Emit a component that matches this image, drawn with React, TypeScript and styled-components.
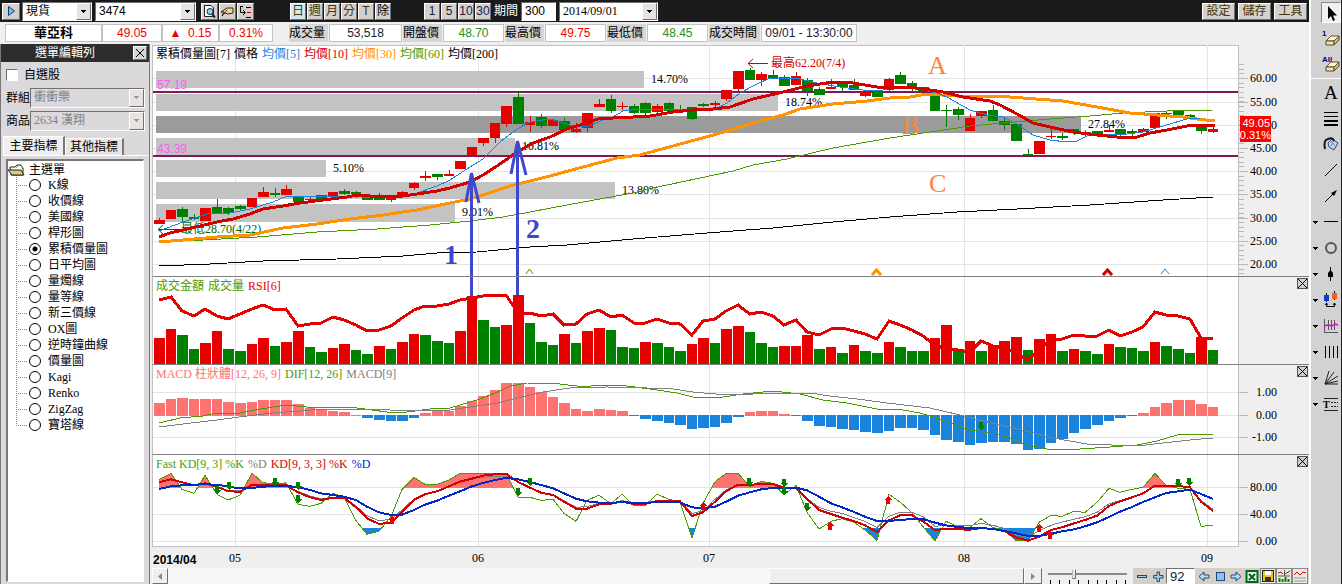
import React from "react";
import styled, { createGlobalStyle, css } from "styled-components";

const SERIF = '"Liberation Serif", "Noto Sans CJK TC", serif';
const SANS = '"Liberation Sans", "Noto Sans CJK TC", sans-serif';

const RED = "#e60000";
const GREEN = "#008000";
const LINE_RED = "#d40000";
const LINE_GREEN = "#4c9a00";
const LINE_BLUE = "#1a84dc";
const LINE_ORANGE = "#ff9200";
const GRID = "#e4e4e4";
const INK = "#3f48cc";

const GlobalStyle = createGlobalStyle`
  *, *::before, *::after { box-sizing: border-box; }
  body { margin: 0; background: #efefef; font: 12px/16px ${SERIF}; color: #000; }
  button, input, select { font: inherit; color: inherit; margin: 0; padding: 0; border-radius: 0; }
  ul { list-style: none; margin: 0; padding: 0; }
  svg { display: block; }
`;

const raised = css`
  border: 1px solid;
  border-color: #fff #707070 #707070 #fff;
`;
const sunken = css`
  border: 1px solid;
  border-color: #707070 #fff #fff #707070;
`;

/* ---------- page frame ---------- */

const Page = styled.div`
  display: flex;
  min-height: 100vh;
`;
const Main = styled.main`
  flex: 1;
  min-width: 0;
  display: flex;
  flex-direction: column;
`;
const Body = styled.div`
  flex: 1;
  display: flex;
`;

/* ---------- top toolbar ---------- */

const TopBar = styled.header`
  display: flex;
  align-items: center;
  height: 22px;
  padding: 0 2px;
  background: #1a1a1a;
  color: #fff;
`;
const Group = styled.div<{ $gap?: number; $before?: number; $end?: boolean }>`
  display: flex;
  align-items: center;
  gap: ${(p) => p.$gap ?? 1}px;
  margin-left: ${(p) => (p.$end ? "auto" : `${p.$before ?? 0}px`)};
`;
const KeyButton = styled.button<{ $w?: number; $on?: boolean; $ink?: string }>`
  ${raised}
  display: flex;
  align-items: center;
  justify-content: center;
  width: ${(p) => p.$w ?? 16}px;
  height: 17px;
  background: ${(p) => (p.$on ? "#cfe9ee" : "#d3d0cd")};
  color: ${(p) => p.$ink ?? "#453508"};
  font: 12px/14px ${SANS};
`;
const Combo = styled.div<{ $w: number; $off?: boolean; $h?: number }>`
  ${sunken}
  display: flex;
  width: ${(p) => p.$w}px;
  height: ${(p) => p.$h ?? 19}px;
  background: ${(p) => (p.$off ? "#dbd9dc" : "#fff")};
  color: ${(p) => (p.$off ? "#808080" : "#000")};
`;
const ComboSelect = styled.select<{ $face?: string }>`
  appearance: none;
  flex: 1;
  min-width: 0;
  border: 0;
  padding: 0 3px;
  background: transparent;
  opacity: 1;
  font: 12px/15px ${(p) => p.$face ?? SERIF};
`;
const ComboArrow = styled.span`
  ${raised}
  display: flex;
  align-items: center;
  justify-content: center;
  width: 15px;
  background: #e6e3e0;
  pointer-events: none;
`;
const PeriodLabel = styled.label`
  display: flex;
  align-items: center;
  gap: 3px;
`;
const PeriodInput = styled.input`
  ${sunken}
  width: 35px;
  height: 19px;
  padding: 0 3px;
  background: #fff;
  color: #000;
  font: 12px/15px ${SANS};
`;

/* ---------- quote bar ---------- */

const QuoteBar = styled.section`
  display: flex;
  align-items: flex-start;
  height: 23px;
  padding: 2px 5px 0;
  font: 12px/16px ${SANS};
`;
const QuoteCell = styled.span<{ $w: number; $ink?: string; $bold?: boolean }>`
  width: ${(p) => p.$w}px;
  height: 18px;
  border: 1px solid #c3c3c3;
  background: #fff;
  color: ${(p) => p.$ink ?? "#1b1b30"};
  font-size: ${(p) => (p.$bold ? 13 : 12)}px;
  font-weight: ${(p) => (p.$bold ? 700 : 400)};
  text-align: center;
  white-space: pre;
`;
const QuoteLabel = styled.span<{ $w: number }>`
  width: ${(p) => p.$w}px;
  height: 18px;
  line-height: 18px;
  background: #d6d6d6;
  white-space: nowrap;
`;

/* ---------- left menu ---------- */

const Side = styled.aside`
  display: flex;
  flex-direction: column;
  width: 150px;
  margin-top: -1px;
  border: solid #777;
  border-width: 0 1px 0 1px;
  background: #dbd9dc;
`;
const SideTitle = styled.div`
  display: flex;
  align-items: center;
  height: 18px;
  padding: 0 2px 0 34px;
  background: #2d2d2d;
  color: #fff;
`;
const CloseButton = styled.button`
  ${raised}
  display: flex;
  align-items: center;
  justify-content: center;
  width: 14px;
  height: 14px;
  margin-left: auto;
  background: #d6d6d6;
`;
const CheckRow = styled.label`
  display: flex;
  align-items: center;
  gap: 6px;
  height: 16px;
  margin: 5px 0 3px 5px;
`;
const Check = styled.input`
  ${sunken}
  appearance: none;
  width: 12px;
  height: 12px;
  background: #fff;
`;
const FieldRow = styled.label`
  display: flex;
  align-items: center;
  height: 23px;
  padding-left: 5px;
`;
const Tabs = styled.div`
  display: flex;
  margin: 4px 0 0 2px;
  border-bottom: 1px solid #fff;
`;
const Tab = styled.button<{ $on?: boolean }>`
  width: ${(p) => (p.$on ? 62 : 59)}px;
  height: ${(p) => (p.$on ? 19 : 17)}px;
  align-self: flex-end;
  border: solid;
  border-width: 1px 2px 0 1px;
  border-color: #fff #777 #fff #fff;
  background: ${(p) => (p.$on ? "#efefef" : "#e6e5e6")};
  white-space: nowrap;
`;
const Tree = styled.div`
  flex: 1;
  margin: 3px 5px 2px;
  padding: 1px 0;
  border: solid;
  border-width: 2px 1px 1px 2px;
  border-color: #777 #fff #fff #777;
  background: #fff;
`;
const TreeRoot = styled.div`
  display: flex;
  align-items: center;
  gap: 4px;
  height: 15px;
`;
const TreeItem = styled.label`
  display: flex;
  align-items: center;
  height: 16px;
  padding-left: 8px;
`;
const Radio = styled.input`
  appearance: none;
  width: 12px;
  height: 12px;
  margin: 0 7px 0 2px;
  border: 1px solid #000;
  border-radius: 50%;
  background: #fff;
  &:checked {
    background: radial-gradient(#000 2px, #fff 3px);
  }
`;

/* ---------- charts ---------- */

const Charts = styled.section`
  flex: 1;
  min-width: 0;
  display: flex;
  flex-direction: column;
  padding-left: 2px;
`;
const PanelRow = styled.div<{ $h: number; $last?: boolean }>`
  display: flex;
  height: ${(p) => p.$h}px;
  border-left: 1px solid #c0c0c0;
  border-bottom: ${(p) => (p.$last ? "0" : "1px solid #808080")};
`;
const Plot = styled.div<{ $last?: boolean }>`
  flex: 1;
  min-width: 0;
  display: grid;
  background: #fff;
  border-bottom: ${(p) => (p.$last ? "1px solid #c0c0c0" : "0")};
`;
const Canvas = styled.svg`
  grid-area: 1 / 1;
  width: 100%;
  height: 100%;
  font: 12px ${SERIF};
`;
const Legend = styled.div`
  grid-area: 1 / 1;
  z-index: 1;
  display: flex;
  gap: 4px;
  align-self: start;
  padding: 1px 3px;
  white-space: pre;
`;
const LegendItem = styled.span<{ $ink: string }>`
  color: ${(p) => p.$ink};
`;
const AxisColumn = styled.div`
  display: grid;
  width: 71px;
  border-left: 1px solid #c0c0c0;
`;
const PanelClose = styled.button`
  grid-area: 1 / 1;
  z-index: 1;
  display: flex;
  align-items: center;
  justify-content: center;
  justify-self: end;
  width: 11px;
  height: 11px;
  margin: 1px 1px 0 0;
  border: 1px solid #555;
  background: #cfcfcf;
`;
const DateRow = styled.div`
  height: 21px;
  border-left: 1px solid transparent;
`;

/* ---------- bottom strip ---------- */

const BottomBar = styled.footer`
  display: flex;
  height: 16px;
`;
const ScrollTrack = styled.div`
  flex: 1;
  display: grid;
  grid-template-columns: 16px 602fr 255fr 18px;
  background: #f6f6f6;
`;
const ScrollPiece = styled.button`
  ${raised}
  display: flex;
  align-items: center;
  justify-content: center;
  background: #efefef;
`;
const ZoomSlider = styled.label`
  display: grid;
  width: 91px;
  padding: 0 6px;
`;
const SliderInput = styled.input`
  appearance: none;
  grid-area: 1 / 1;
  z-index: 1;
  width: 79px;
  height: 12px;
  background: transparent;
  &::-webkit-slider-runnable-track {
    height: 2px;
    background: #8a8a8a;
  }
  &::-webkit-slider-thumb {
    appearance: none;
    width: 4px;
    height: 10px;
    margin-top: -4px;
    border: 1px solid;
    border-color: #fff #707070 #707070 #bbb;
    background: #e6e6e6;
  }
`;
const SliderTicks = styled.svg`
  grid-area: 1 / 1;
  align-self: end;
  width: 79px;
  height: 4px;
`;
const MiniBar = styled.div`
  display: flex;
  align-items: center;
  width: 176px;
  padding: 0 1px;
  background: #d4d0c8;
`;
const MiniButton = styled.button<{ $on?: boolean }>`
  display: flex;
  align-items: center;
  justify-content: center;
  width: 16px;
  height: 16px;
  border: ${(p) => (p.$on ? "1px solid #888" : "0")};
  background: ${(p) => (p.$on ? "#ebe9e4" : "transparent")};
`;
const MiniInput = styled.input`
  ${sunken}
  width: 29px;
  height: 16px;
  padding: 0 3px;
  margin-right: 1px;
  background: #fff;
  color: #1b1b30;
  font: 13px/14px ${SANS};
`;

/* ---------- right tool rail ---------- */

const Rail = styled.nav`
  display: flex;
  flex-direction: column;
  width: 33px;
  padding-top: 2px;
  border-left: 2px solid #fff;
  border-right: 1px solid #222;
  background: #d2d2d2;
`;
const RailButton = styled.button<{ $on?: boolean }>`
  display: flex;
  align-items: center;
  justify-content: flex-end;
  gap: 4px;
  align-self: flex-end;
  height: ${(p) => (p.$on ? 21 : 20)}px;
  margin-bottom: ${(p) => (p.$on ? 5 : 6)}px;
  border: 1px solid;
  border-color: ${(p) => (p.$on ? "#888 #fff #fff #888" : "transparent")};
  background: ${(p) => (p.$on ? "#f0f0f0" : "transparent")};
`;
const RailRule = styled.hr`
  width: 100%;
  height: 1px;
  margin: -2px 0 3px;
  border: 0;
  background: #fff;
`;

/* ---------- data ---------- */

const X0 = 6;
const STEP = 11.58;
const dayX = (i: number) => Math.round(X0 + i * STEP);
const dayWidth = (i: number) => dayX(i + 1) - dayX(i) - 1;
const MONTHS: [number, string][] = [
  [82, "05"],
  [325, "06"],
  [556, "07"],
  [811, "08"],
  [1054, "09"],
];

// One day per entry: direction, body top, body bottom, wick top, wick bottom.
type Candle = [0 | 1, number, number, number, number];
const CANDLES: Candle[] = [
  [1,220,224,218,224],[1,210,219,210,219],[0,209,217,207,222],[0,217,219,214,220],[1,208,221,208,221],[0,207,213,199,213],
  [0,208,213,207,215],[0,206,209,205,210],[1,198,207,198,207],[1,192,197,187,197],[0,193,195,188,197],[1,189,195,185,195],
  [0,197,202,197,202],[1,199,200,196,202],[0,195,199,195,199],[1,192,196,192,196],[0,191,194,189,195],[0,192,194,191,198],
  [0,197,200,197,200],[0,197,200,193,200],[1,198,200,198,202],[1,192,196,191,196],[1,183,188,182,190],[1,176,178,171,181],
  [0,174,177,174,180],[1,174,176,170,176],[1,161,169,161,169],[1,147,155,147,155],[1,138,143,138,146],[1,123,138,123,143],
  [1,106,124,106,127],[0,97,124,92,124],[1,122,125,116,132],[0,117,126,114,128],[1,120,126,119,126],[0,121,130,118,130],
  [1,129,132,123,133],[1,113,128,113,132],[1,104,107,99,107],[0,99,111,95,113],[1,106,107,102,110],[0,106,113,104,114],
  [0,103,113,102,115],[1,106,112,104,114],[0,103,111,102,111],[0,109,111,105,112],[0,107,119,107,120],[0,104,106,103,107],
  [1,103,105,101,107],[1,90,99,90,101],[1,71,89,71,91],[0,70,80,68,80],[1,74,80,72,86],[0,75,79,70,79],
  [0,77,86,75,86],[1,76,85,72,85],[0,80,91,78,96],[0,89,95,87,95],[1,87,89,79,89],[0,82,87,82,91],
  [0,85,90,79,90],[1,91,96,91,97],[0,90,97,90,97],[1,79,90,78,93],[0,75,84,72,84],[0,83,87,81,91],
  [0,87,91,87,91],[0,95,111,95,111],[0,110,111,105,127],[0,109,115,107,120],[1,118,131,114,131],[1,111,116,111,118],
  [0,110,121,105,121],[0,121,125,117,130],[0,124,141,124,141],[0,154,155,149,155],[1,141,154,141,154],[1,136,137,129,139],
  [0,136,138,133,140],[0,129,133,129,135],[0,132,134,130,137],[0,131,135,131,135],[1,130,132,126,132],[0,129,135,129,138],
  [0,131,133,129,136],[1,129,132,128,132],[1,113,128,113,128],[0,113,114,111,119],[0,111,115,111,115],[0,115,117,114,119],
  [0,127,131,127,134],[1,129,132,126,133],
];

const PROFILE = [
  { y: 71, h: 17, end: 644, label: "14.70%" },
  { y: 94, h: 17, end: 778, label: "18.74%" },
  { y: 116, h: 17, end: 1081, label: "27.84%", dark: true },
  { y: 138, h: 17, end: 515, label: "10.81%" },
  { y: 160, h: 17, end: 326, label: "5.10%" },
  { y: 182, h: 17, end: 615, label: "13.80%" },
  { y: 204, h: 18, end: 455, label: "9.01%" },
];

const MA5 =
  "159,231 183,222 207,214 230,213 250,209 273,202 287,196 337,196 363,197 397,197 417,193 437,186 450,180 470,167 483,159 500,142 517,129 530,122 550,119 570,125 587,127 600,121 613,117 623,111 640,109 693,109 700,111 717,108 727,103 740,93 753,86 770,78 787,78 800,79 817,83 840,87 863,90 883,90 895,87 913,88 923,90 937,93 947,97 970,110 987,115 1003,117 1017,124 1033,135 1050,140 1067,142 1077,141 1087,136 1103,135 1127,134 1143,132 1163,126 1180,121 1190,118 1200,119";
const MA10 =
  "159,237 170,233 183,230 200,226 217,222 233,219 250,214 263,209 283,206 300,203 323,200 347,197 357,195 370,196 403,196 417,194 437,191 450,188 470,182 483,175 497,166 510,157 517,152 533,143 550,137 567,129 583,124 598,119 613,118 633,117 650,116 673,112 693,110 713,109 730,107 753,99 783,92 807,86 833,82 853,83 877,87 907,87 923,89 943,92 963,97 990,101 1000,105 1017,114 1033,123 1050,127 1073,132 1097,135 1117,137 1137,137 1150,133 1167,130 1187,126 1215,125";
const MA30 =
  "159,242 183,240 217,237 250,235 283,228 317,224 350,219 383,215 417,210 450,203 470,199 483,195 510,186 550,176 583,167 617,158 640,155 673,146 717,134 740,127 767,119 783,115 800,109 833,104 867,101 890,98 910,97 927,94 957,96 997,96 1023,98 1063,101 1097,107 1130,113 1157,115 1183,117 1197,119 1215,121";
const MA60 =
  "159,242 203,240 257,237 317,232 377,229 430,225 470,221 503,217 530,212 567,205 633,193 653,188 700,178 733,171 753,165 787,159 833,148 890,138 930,132 970,126 1003,123 1050,119 1090,116 1123,113 1167,111 1213,110";
const MA200 =
  "159,266 210,264 263,261 337,259 403,256 437,253 477,252 530,247 567,245 633,239 707,233 773,228 833,222 890,217 957,212 1017,209 1090,205 1163,200 1213,197";

// Volume: height of each day's bar, negative on a falling day.
const VOLUME = [
  26,35,-29,-15,21,33,-15,-13,20,26,-18,22,33,-17,-12,16,20,-14,-10,18,-15,22,30,-29,-23,-21,33,68,-44,-37,39,69,-41,-22,-19,30,-21,33,36,-34,-17,-16,22,-21,-17,-13,
  20,26,-21,35,38,-32,-21,-17,18,18,29,-15,17,-11,19,-13,-11,22,-17,-13,-13,26,39,-13,23,-13,19,23,27,-14,25,30,-13,15,-13,-10,20,-17,-16,-13,22,-18,-15,-11,27,-14,
];
const RSI = [
  64,67,53,48,55,48,45,50,55,59,54,55,38,40,41,47,44,39,33,34,38,46,54,58,58,60,64,66,68,69,69,51,51,48,50,39,40,50,54,47,49,41,41,45,41,40,
  29,43,45,53,59,50,52,48,39,44,32,29,35,36,33,30,25,43,39,34,28,19,15,14,12,23,18,16,11,4,14,25,25,29,28,28,34,28,32,37,52,49,48,45,26,26,
];
const HISTOGRAM = [
  13,17,18,17,17,17,14,13,14,16,16,16,12,8,6,5,4,1,-3,-5,-6,-6,-3,3,5,5,10,15,20,26,33,33,29,24,19,13,7,5,7,6,5,-1,-4,-6,-8,-10,
  -14,-13,-12,-8,-2,4,5,5,2,-1,-6,-11,-12,-14,-15,-17,-18,-16,-13,-13,-15,-20,-25,-27,-30,-28,-27,-27,-29,-35,-34,-28,-24,-18,-14,-10,-6,-3,-1,3,9,13,16,16,12,9,
];
const DIF =
  "159,423 180,418 203,416 216,413 240,413 260,409 287,405 307,407 337,407 357,408 387,412 407,412 430,409 450,408 480,399 500,391 510,386 527,383 560,384 585,387 598,385 627,386 650,389 677,393 693,397 717,398 743,394 773,391 800,394 823,400 847,403 877,409 903,410 920,413 930,416 950,423 970,430 997,434 1013,439 1027,445 1047,449 1080,449 1110,447 1137,445 1157,441 1177,435 1190,434 1213,435";
const SIGNAL =
  "159,427 183,424 217,420 247,416 273,413 300,411 323,409 360,409 390,410 417,411 450,410 470,407 497,403 517,398 543,392 570,388 607,387 647,388 673,389 693,392 727,395 753,394 773,393 810,393 830,396 857,399 887,403 930,408 960,415 983,421 1010,427 1030,432 1053,438 1087,444 1137,446 1163,443 1190,440 1213,438";

// Stochastic lines, measured downward in thirds of a pixel.
const FAST_K = [
  88,70,118,130,76,133,150,136,70,98,103,98,163,169,160,130,142,212,253,244,200,118,82,103,103,90,70,70,70,70,70,142,142,151,148,190,214,151,136,161,133,166,166,133,148,157,
  265,160,95,70,70,110,94,100,134,106,187,237,214,206,217,240,271,133,156,188,230,273,214,230,232,206,233,240,272,273,217,196,199,184,187,157,115,127,118,112,70,106,115,118,229,226,
];
const SLOW_K = [
  97,88,97,106,100,110,124,125,104,104,104,106,127,142,150,143,143,172,205,222,218,185,149,133,124,109,95,86,77,73,71,96,113,128,135,155,176,176,163,161,155,162,162,153,153,154,
  198,187,155,124,104,105,101,102,113,114,147,180,192,203,213,226,246,211,196,196,214,241,236,238,239,234,237,243,262,272,260,240,232,220,210,197,168,154,142,130,107,108,108,112,155,183,
];
const FAST_D = [
  97,88,97,106,98,108,122,123,104,104,104,106,124,138,146,142,142,168,197,212,208,180,147,131,122,109,95,86,82,79,79,96,113,128,133,152,172,170,160,159,152,159,159,152,152,153,
  191,182,148,120,104,105,101,102,113,114,145,172,184,190,203,214,232,199,187,187,200,229,225,226,227,220,226,235,255,262,242,226,216,208,200,187,162,152,140,130,107,108,108,112,151,178,
];
const SLOW_D = [
  117,109,106,104,103,104,110,115,114,110,108,108,111,120,130,135,140,150,170,187,195,194,180,164,152,137,124,109,99,90,84,88,96,105,115,130,146,154,158,158,157,158,158,157,156,157,
  172,175,170,155,137,127,118,114,114,113,121,140,160,172,186,200,213,213,210,207,207,218,226,231,234,234,237,243,250,258,258,251,244,238,229,217,201,185,171,156,142,129,124,119,132,147,
];
const SELL: [number, number][] = [
  [217,490],[229,486],[275,482],[298,486],[298,499],[518,492],[530,482],[749,482],[784,483],[784,491],[807,507],[1178,483],[1189,482],
];
const BUY: [number, number][] = [[392,520],[703,506],[830,526],[888,500],[1039,528],[1050,535]];

const MENU = ["K線", "收價線", "美國線", "桿形圖", "累積價量圖", "日平均圖", "量燭線", "量等線", "新三價線", "OX圖", "逆時鐘曲線", "價量圖", "Kagi", "Renko", "ZigZag", "寶塔線"];

/* ---------- small parts ---------- */

const Caret = ({ ink = "#000" }: { ink?: string }) => (
  <svg width="5" height="3" shapeRendering="crispEdges">
    <path d="M0 0h5L2.5 3z" fill={ink} />
  </svg>
);

const Cross = ({ size }: { size: number }) => (
  <svg width={size} height={size}>
    <path d={`M0 0L${size} ${size}M${size} 0L0 ${size}`} stroke="#000" />
  </svg>
);

function Dropdown(p: { w: number; h?: number; value: string; name: string; face?: string; off?: boolean }) {
  return (
    <Combo $w={p.w} $h={p.h} $off={p.off}>
      <ComboSelect aria-label={p.name} disabled={p.off} $face={p.face} defaultValue={p.value}>
        <option>{p.value}</option>
      </ComboSelect>
      <ComboArrow>
        <Caret ink={p.off ? "#999" : "#000"} />
      </ComboArrow>
    </Combo>
  );
}

const MonthLines = () => (
  <>
    {MONTHS.map(([x]) => (
      <rect key={x} x={x} y={0} width={1} height="100%" fill={GRID} />
    ))}
  </>
);

const LevelLines = ({ ys }: { ys: number[] }) => (
  <>
    {ys.map((y) => (
      <rect key={y} x={0} y={y} width="100%" height={1} fill={GRID} />
    ))}
  </>
);

function Marker({ x, y, up }: { x: number; y: number; up?: boolean }) {
  return (
    <path
      d={up ? "M0-4L4 0H2V4H-2V0H-4z" : "M0 4L4 0H2V-4H-2V0H-4z"}
      transform={`translate(${x} ${y})`}
      fill={up ? RED : GREEN}
    />
  );
}

const trace = (ys: number[], toY: (v: number) => number) => ys.map((v, i) => `${dayX(i)},${toY(v)}`).join(" ");

function AxisLabels({ items }: { items: [number, string][] }) {
  return (
    <>
      {items.map(([y, t]) => (
        <g key={t}>
          <rect x={0} y={y} width={9} height={1} fill="#b8b8b8" />
          <text x={38} y={y + 4} textAnchor="end">
            {t}
          </text>
        </g>
      ))}
    </>
  );
}

function ClosePanel({ name }: { name: string }) {
  return (
    <PanelClose aria-label={`關閉 ${name}`}>
      <Cross size={9} />
    </PanelClose>
  );
}

/* ---------- panels ---------- */

const PRICE_LEVELS: [number, string][] = [
  [33, "60.00"], [57, "55.00"], [80, "50.00"], [103, "45.00"], [126, "40.00"],
  [149, "35.00"], [173, "30.00"], [196, "25.00"], [219, "20.00"],
];

function PricePanel() {
  return (
    <PanelRow $h={232}>
      <Plot>
        <Canvas fill="none">
          <rect width="100%" height={1} fill="#c0c0c0" />
          <MonthLines />
          <LevelLines ys={PRICE_LEVELS.map(([y]) => y)} />
          <g transform="translate(-153 -45)">
            {PROFILE.map((b) => (
              <rect key={b.y} x={156} y={b.y} width={b.end - 156} height={b.h} fill={b.dark ? "#9b9b9b" : "#c3c3c3"} />
            ))}
            <g fill="#ff5cf4" fontFamily={SANS}>
              <text x={157} y={89}>57.19</text>
              <text x={157} y={153}>43.39</text>
            </g>
          </g>
          <rect y={46} width="100%" height={2} fill="#7d1a55" />
          <rect y={110} width="100%" height={2} fill="#7d1a55" />
          <g transform="translate(0 -45)" shapeRendering="crispEdges">
            {CANDLES.map(([up, top, bottom, high, low], i) => (
              <g key={i} fill={up ? RED : GREEN}>
                <rect x={dayX(i) - 5} y={top} width={dayWidth(i)} height={bottom - top || 1} />
                <rect x={dayX(i)} y={high} width={1} height={low - high} />
              </g>
            ))}
          </g>
          <g transform="translate(-153 -45)">
            <g fill="#000">
              {PROFILE.map((b) => (
                <text key={b.y} x={b.end + 7} y={b.y + 12}>
                  {b.label}
                </text>
              ))}
            </g>
            <text x={181} y={233} fill="#006400">最低28.70(4/22)</text>
            <path d="M178 229.5H158M163 225L158 229.5L163 234" stroke="#006400" />
            <g shapeRendering="crispEdges">
              <polyline points={MA200} stroke="#000" />
              <polyline points={MA60} stroke={LINE_GREEN} />
              <polyline points={MA30} stroke={LINE_ORANGE} strokeWidth={3} />
              <polyline points={MA5} stroke={LINE_BLUE} />
              <polyline points={MA10} stroke={LINE_RED} strokeWidth={3} />
            </g>
            <text x={771} y={67} fill={LINE_RED}>最高62.20(7/4)</text>
            <path d="M768 63.5H748M753 59L748 63.5L753 68" stroke={LINE_RED} />
            <path d="M526 274L529.5 269L533 274" stroke={LINE_GREEN} />
            <path d="M872 275L876.5 270L881 275" stroke={LINE_ORANGE} strokeWidth={3} />
            <path d="M1103 275L1107.5 270L1112 275" stroke={LINE_RED} strokeWidth={3} />
            <path d="M1161 274L1165 269L1169 274" stroke={LINE_BLUE} />
            <g stroke={INK} strokeWidth={3}>
              <path d="M471.5 276V174M466 202L471.5 173L479 203" />
              <path d="M517.5 276V142M511 174L517.5 141L526 175" />
            </g>
            <g fill={INK} fontSize={28} fontWeight={700}>
              <text x={444} y={264}>1</text>
              <text x={526} y={238}>2</text>
            </g>
            <g fill="#ff8438" fontSize={26}>
              <text x={928} y={74}>A</text>
              <text x={902} y={134}>B</text>
              <text x={929} y={192}>C</text>
            </g>
          </g>
        </Canvas>
        <Legend>
          <LegendItem $ink="#000">累積價量圖[7]</LegendItem>
          <LegendItem $ink="#000">價格</LegendItem>
          <LegendItem $ink={LINE_BLUE}>均價[5]</LegendItem>
          <LegendItem $ink={LINE_RED}>均價[10]</LegendItem>
          <LegendItem $ink={LINE_ORANGE}>均價[30]</LegendItem>
          <LegendItem $ink={LINE_GREEN}>均價[60]</LegendItem>
          <LegendItem $ink="#000">均價[200]</LegendItem>
        </Legend>
      </Plot>
      <AxisColumn>
        <Canvas>
          {Array.from({ length: 46 }, (_, i) => (
            <rect key={i} x={0} y={Math.round(19 + i * 4.65)} width={5} height={1} fill="#b8b8b8" />
          ))}
          <AxisLabels items={PRICE_LEVELS} />
          <rect x={1} y={71} width={31} height={26} fill="#f00" />
          <g fill="#fff" fontFamily={SANS} fontSize={11} textAnchor="end">
            <text x={31} y={82}>49.05</text>
            <text x={32} y={94}>0.31%</text>
          </g>
        </Canvas>
      </AxisColumn>
    </PanelRow>
  );
}

function VolumePanel() {
  return (
    <PanelRow $h={88}>
      <Plot>
        <Canvas fill="none" shapeRendering="crispEdges">
          <MonthLines />
          {VOLUME.map((v, i) => (
            <rect key={i} x={dayX(i) - 5} y={87 - Math.abs(v)} width={dayWidth(i)} height={Math.abs(v)} fill={v > 0 ? RED : GREEN} />
          ))}
          <polyline points={trace(RSI, (v) => 87 - v)} stroke={RED} strokeWidth={3} />
          <path d="M318.5 0V19M364.5 0V18" stroke={INK} strokeWidth={3} />
        </Canvas>
        <Legend>
          <LegendItem $ink={LINE_GREEN}>成交金額</LegendItem>
          <LegendItem $ink={LINE_GREEN}>成交量</LegendItem>
          <LegendItem $ink={RED}>RSI[6]</LegendItem>
        </Legend>
      </Plot>
      <AxisColumn>
        <ClosePanel name="成交量" />
      </AxisColumn>
    </PanelRow>
  );
}

function MacdPanel() {
  return (
    <PanelRow $h={90}>
      <Plot>
        <Canvas fill="none" shapeRendering="crispEdges">
          <MonthLines />
          <LevelLines ys={[27, 50, 72]} />
          {HISTOGRAM.map((v, i) => (
            <rect key={i} x={dayX(i) - 5} y={v > 0 ? 51 - v : 50} width={dayWidth(i)} height={Math.abs(v)} fill={v > 0 ? "#ff7272" : "#1a84dc"} />
          ))}
          <g transform="translate(-153 -365)">
            <polyline points={DIF} stroke={LINE_GREEN} />
            <polyline points={SIGNAL} stroke="#808080" />
            <Marker x={981} y={426} />
          </g>
        </Canvas>
        <Legend>
          <LegendItem $ink="#ff7272">MACD 柱狀體[12, 26, 9]</LegendItem>
          <LegendItem $ink={LINE_GREEN}>DIF[12, 26]</LegendItem>
          <LegendItem $ink="#808080">MACD[9]</LegendItem>
        </Legend>
      </Plot>
      <AxisColumn>
        <Canvas>
          <AxisLabels items={[[27, "1.00"], [50, "0.00"], [72, "-1.00"]]} />
        </Canvas>
        <ClosePanel name="MACD" />
      </AxisColumn>
    </PanelRow>
  );
}

function KdPanel() {
  const toY = (v: number) => v / 3 - 5;
  const fastK = trace(FAST_K, toY);
  const last = dayX(FAST_K.length - 1);
  return (
    <PanelRow $h={92} $last>
      <Plot $last>
        <Canvas fill="none" shapeRendering="crispEdges">
          <defs>
            <clipPath id="overbought">
              <rect width={1085} height={33} />
            </clipPath>
            <clipPath id="oversold">
              <rect y={73} width={1085} height={18} />
            </clipPath>
          </defs>
          <MonthLines />
          <LevelLines ys={[32, 59, 86]} />
          <polygon points={`${X0},33 ${fastK} ${last},33`} fill="#ff7272" clipPath="url(#overbought)" />
          <polygon points={`${X0},73 ${fastK} ${last},73`} fill="#1a84dc" clipPath="url(#oversold)" />
          <polyline points={fastK} stroke={LINE_GREEN} />
          <polyline points={trace(FAST_D, toY)} stroke="#808080" />
          <polyline points={trace(SLOW_K, toY)} stroke={LINE_RED} strokeWidth={2} />
          <polyline points={trace(SLOW_D, toY)} stroke="#0028c8" strokeWidth={2} />
          <g transform="translate(-153 -455)">
            {SELL.map(([x, y], i) => (
              <Marker key={i} x={x} y={y} />
            ))}
            {BUY.map(([x, y], i) => (
              <Marker key={i} x={x} y={y} up />
            ))}
          </g>
        </Canvas>
        <Legend>
          <LegendItem $ink={LINE_GREEN}>Fast KD[9, 3] %K</LegendItem>
          <LegendItem $ink="#808080">%D</LegendItem>
          <LegendItem $ink={LINE_RED}>KD[9, 3, 3] %K</LegendItem>
          <LegendItem $ink="#0028c8">%D</LegendItem>
        </Legend>
      </Plot>
      <AxisColumn>
        <Canvas>
          <AxisLabels items={[[32, "80.00"], [59, "40.00"], [86, "0.00"]]} />
        </Canvas>
        <ClosePanel name="KD" />
      </AxisColumn>
    </PanelRow>
  );
}

/* ---------- rail icons ---------- */

const Eraser = ({ text }: { text: string }) => (
  <>
    <text x="0" y="7" fontSize="8" fontWeight="700" fill="#000080" fontFamily={SANS}>{text}</text>
    <path d="M4 12L9 7H17L12 12z" fill="#fffbe0" stroke="#5a4a28" />
    <path d="M4 12H12V16H4z" fill="#f0e2b8" stroke="#5a4a28" />
    <path d="M12 12L17 7V11L12 16z" fill="#d8b878" stroke="#5a4a28" />
  </>
);

const TOOLS: { name: string; menu?: boolean; on?: boolean; rule?: boolean; art: React.ReactNode }[] = [
  { name: "選取", on: true, art: <path d="M6 2V15L9 12L11 17L13 16L11 11.5H15z" fill="#000" /> },
  { name: "清除一個", art: <Eraser text="1" /> },
  { name: "清除全部", rule: true, art: <Eraser text="All" /> },
  { name: "文字", art: <text x="2" y="16" fontSize="19" fill="#000" fontFamily={SERIF}>A</text> },
  { name: "線寬", art: <path d="M2 3.5H16M2 7.5H16M2 11.5H16M2 12.5H16M2 15.5H16M2 16.5H16" stroke="#000" /> },
  {
    name: "填色",
    art: (
      <>
        <path d="M6 8L10 4L16 8L12 15L7 12z" fill="#b8d4f4" stroke="#446" />
        <path d="M9 6L13 11M12 5L9 11" stroke="#6a94d0" />
        <path d="M3 14Q1 5 6 4Q11 2 12 6" fill="none" stroke="#112" strokeWidth="2" />
      </>
    ),
  },
  { name: "線段", art: <path d="M3 15L15 3" stroke="#000" /> },
  { name: "箭頭", art: <><path d="M3 15L13 5" stroke="#000" /><path d="M15 3L9 6L12 9z" /></> },
  { name: "水平線", menu: true, art: <path d="M2 8.5H16" stroke="#000" /> },
  { name: "圓形", menu: true, art: <circle cx="9" cy="9" r="5" fill="none" stroke="#555" strokeWidth="2" /> },
  { name: "單根", menu: true, art: <><path d="M8.5 2V16" stroke="#000" /><path d="M8.500 5L11 8V12H6V8z" /></> },
  {
    name: "比較",
    menu: true,
    art: (
      <>
        <path d="M4.5 2V11M12.5 0V9M4.5 12V15.5H12.5V12M3 14L4.5 12L6 14M11 14L12.5 12L14 14" fill="none" stroke="#000" />
        <rect x="2" y="4" width="5" height="6" fill="#0a3cd8" />
        <rect x="10" y="2" width="5" height="6" fill="#f06020" />
      </>
    ),
  },
  { name: "週期", menu: true, art: <><path d="M2.5 2V15.5H16M6.5 3V13M9.5 3V13M12.5 3V13" fill="none" stroke="#555" /><path d="M2 9L6 8L10 9L13 7L16 8" fill="none" stroke="#e000e0" strokeWidth="1.5" /></> },
  { name: "等距線", menu: true, art: <path d="M3.5 3V15M7.5 3V15M11.5 3V15M15.5 3V15" stroke="#000" /> },
  { name: "扇形", menu: true, art: <path d="M3 15L7 2M3 15L12 3M3 15L16 7M3 15H16M3 15L16 12" stroke="#222" /> },
  {
    name: "標註",
    menu: true,
    art: (
      <>
        <path d="M2 3.5H16M2 15.5H16" stroke="#222" />
        <path d="M9 7.5H16M9 11.5H16" stroke="#222" strokeDasharray="2 1" />
        <text x="1" y="13" fontSize="10" fontWeight="700" fontFamily={SERIF}>T</text>
      </>
    ),
  },
];

/* ---------- bottom icons ---------- */

const MINI: { name: string; on?: boolean; art: React.ReactNode }[] = [
  { name: "上一步", art: <path d="M2 7.5L7 3V6H12V9H7V12z" fill="#b4dcf4" stroke="#224a78" /> },
  { name: "停止", art: <rect x="3.5" y="3.5" width="8" height="8" fill="#8cc0f0" stroke="#224a78" /> },
  { name: "下一步", art: <path d="M12 7.5L7 3V6H2V9H7V12z" fill="#b4dcf4" stroke="#224a78" /> },
  { name: "匯出", art: <><rect x="1.5" y="2" width="11" height="11" fill="#e8f4e8" stroke="#006820" strokeWidth="2" /><path d="M4 5L10 11M10 5L4 11" stroke="#006820" strokeWidth="2" /></> },
  { name: "儲存", on: true, art: <><rect x="1.5" y="1.5" width="11" height="11" fill="#e8c820" stroke="#222" /><rect x="4" y="2" width="6" height="4" fill="#fff" /><rect x="4" y="8" width="6" height="5" fill="#333" /></> },
  { name: "圖表一", on: true, art: <><path d="M1 7H13M7.5 1V7" stroke="#555" /><path d="M1 4L4 3L6 5M8 5L13 2" stroke="#d00000" fill="none" /><path d="M2.5 13V9M5.5 13V10M8.5 13V8M11.5 13V10" stroke="#008000" strokeWidth="2" /></> },
  { name: "圖表二", on: true, art: <><path d="M1 9H13M1 12H13" stroke="#999" /><path d="M1 6L4 3L7 6L10 3L13 4" stroke="#d00000" fill="none" /></> },
];

/* ---------- page ---------- */

export default function App() {
  return (
    <Page>
      <GlobalStyle />
      <Main>
        <TopBar>
          <Group $gap={2}>
            <KeyButton $w={18} aria-label="執行">
              <svg width="10" height="12">
                <path d="M2.5 1.5L8.5 6L2.5 10.5z" fill="#6cc0f0" stroke="#123a70" />
              </svg>
            </KeyButton>
            <Dropdown w={70} value="現貨" name="市場" />
          </Group>
          <Group $before={3}>
            <Dropdown w={101} value="3474" name="代碼" face={SANS} />
          </Group>
          <Group $before={5}>
            <KeyButton $w={17} aria-label="搜尋">
              <svg width="15" height="15" fill="none" stroke="#223">
                <path d="M2.5 1.5H9L11.5 4V12.5H2.5z" fill="#fff" />
                <circle cx="8" cy="7.5" r="3" fill="#7adcf0" />
                <path d="M10 10L13 13.5" strokeWidth="2" />
              </svg>
            </KeyButton>
            <KeyButton $w={17} aria-label="書寫">
              <svg width="15" height="15">
                <path d="M1 8L7 4H13V9L8 10L5 9L2 12L4 8z" fill="#f4cfa4" stroke="#3a2410" />
                <path d="M2 12L7 6" stroke="#3a2410" />
              </svg>
            </KeyButton>
            <KeyButton $w={17} aria-label="插入">
              <svg width="15" height="15" fill="none" stroke="#000">
                <path d="M5 2.5H2.5V8.5H7M5 6L7.5 8.5L5 11M8 3.5H13M8 13.5H13" />
                <path d="M9 8.5H13" stroke="#d00000" />
              </svg>
            </KeyButton>
          </Group>
          <Group $before={36}>
            {["日", "週", "月", "分", "T", "除"].map((t) => (
              <KeyButton key={t} $on={t === "日"} $ink={t === "除" ? "#000" : undefined}>{t}</KeyButton>
            ))}
          </Group>
          <Group $before={33}>
            {["1", "5", "10", "30"].map((t) => (
              <KeyButton key={t} $ink="#1b1b40">{t}</KeyButton>
            ))}
          </Group>
          <Group $before={3} $gap={3}>
            <PeriodLabel>
              期間
              <PeriodInput defaultValue="300" />
            </PeriodLabel>
            <Dropdown w={99} value="2014/09/01" name="日期" />
          </Group>
          <Group $end $gap={3}>
            {["設定", "儲存", "工具"].map((t) => (
              <KeyButton key={t} $w={33}>{t}</KeyButton>
            ))}
          </Group>
        </TopBar>

        <QuoteBar>
          <QuoteCell $w={97} $bold $ink="#000">華亞科</QuoteCell>
          <QuoteCell $w={60} $ink="#f00000">49.05</QuoteCell>
          <QuoteCell $w={57} $ink="#f00000">▲  0.15</QuoteCell>
          <QuoteCell $w={54} $ink="#f00000">0.31%</QuoteCell>
          <Group $before={16}>
            <QuoteLabel $w={39}>成交量</QuoteLabel>
            <QuoteCell $w={73}>53,518</QuoteCell>
            <QuoteLabel $w={39}>開盤價</QuoteLabel>
            <QuoteCell $w={61} $ink="#279022">48.70</QuoteCell>
            <QuoteLabel $w={39}>最高價</QuoteLabel>
            <QuoteCell $w={61} $ink="#f00000">49.75</QuoteCell>
            <QuoteLabel $w={39}>最低價</QuoteLabel>
            <QuoteCell $w={61} $ink="#279022">48.45</QuoteCell>
            <QuoteLabel $w={51}>成交時間</QuoteLabel>
            <QuoteCell $w={96}>09/01 - 13:30:00</QuoteCell>
          </Group>
        </QuoteBar>

        <Body>
          <Side>
            <SideTitle>
              選單編輯列
              <CloseButton aria-label="關閉">
                <Cross size={8} />
              </CloseButton>
            </SideTitle>
            <CheckRow>
              <Check type="checkbox" />
              自選股
            </CheckRow>
            <FieldRow>
              群組
              <Dropdown w={115} h={20} value="衝衝樂" name="群組" off />
            </FieldRow>
            <FieldRow>
              商品
              <Dropdown w={115} h={20} value="2634 漢翔" name="商品" off />
            </FieldRow>
            <Tabs>
              <Tab $on>主要指標</Tab>
              <Tab>其他指標</Tab>
            </Tabs>
            <Tree>
              <TreeRoot>
                <svg width="17" height="14">
                  <path d="M2 4H7L9 2H13L15 6V12H3z" fill="#fff" stroke="#222" />
                  <path d="M8 5L12 1L16 6" fill="none" stroke="#6cb020" />
                  <path d="M0 7H13L16 12H4z" fill="#d8cc80" stroke="#222" />
                </svg>
                主選單
              </TreeRoot>
              <ul>
                {MENU.map((t, i) => (
                  <li key={t}>
                    <TreeItem>
                      <svg width="11" height="16" stroke="#888" strokeDasharray="1 1" shapeRendering="crispEdges">
                        <path d={`M0.5 0V${i === MENU.length - 1 ? 8 : 16}M0 8.5H11`} />
                      </svg>
                      <Radio type="radio" name="indicator" defaultChecked={i === 4} />
                      {t}
                    </TreeItem>
                  </li>
                ))}
              </ul>
            </Tree>
          </Side>

          <Charts>
            <PricePanel />
            <VolumePanel />
            <MacdPanel />
            <KdPanel />
            <DateRow>
              <Canvas>
                <text x={0} y={17} fontFamily={SANS} fontWeight={700}>2014/04</text>
                {MONTHS.map(([x, t]) => (
                  <text key={t} x={x} y={15} textAnchor="middle">{t}</text>
                ))}
              </Canvas>
            </DateRow>
            <BottomBar>
              <ScrollTrack>
                <ScrollPiece aria-label="向左捲動">
                  <svg width="4" height="7"><path d="M4 0V7L0 3.5z" fill="#888" /></svg>
                </ScrollPiece>
                <span />
                <ScrollPiece aria-label="捲動軸" />
                <ScrollPiece aria-label="向右捲動">
                  <svg width="4" height="7"><path d="M0 0V7L4 3.5z" fill="#888" /></svg>
                </ScrollPiece>
              </ScrollTrack>
              <ZoomSlider>
                <SliderInput type="range" min={0} max={100} defaultValue={32} aria-label="縮放" />
                <SliderTicks>
                  {Array.from({ length: 9 }, (_, i) => (
                    <rect key={i} x={2 + Math.round(i * 9.4)} y={0} width={1} height={4} fill="#000" />
                  ))}
                </SliderTicks>
              </ZoomSlider>
              <MiniBar>
                <MiniButton aria-label="縮小">
                  <svg width="14" height="15"><rect x="2.5" y="6.5" width="9" height="2" fill="#a0d0f0" stroke="#224a78" /></svg>
                </MiniButton>
                <MiniButton aria-label="放大">
                  <svg width="14" height="15"><path d="M6 3H8.500V6.500H12V9H8.500V12.500H6V9H2.500V6.500H6z" fill="#a0d0f0" stroke="#224a78" /></svg>
                </MiniButton>
                <MiniInput defaultValue="92" aria-label="顯示筆數" />
                {MINI.map((m) => (
                  <MiniButton key={m.name} $on={m.on} aria-label={m.name}>
                    <svg width="14" height="14">{m.art}</svg>
                  </MiniButton>
                ))}
              </MiniBar>
            </BottomBar>
          </Charts>
        </Body>
      </Main>

      <Rail>
        {TOOLS.map((t) => (
          <React.Fragment key={t.name}>
            <RailButton $on={t.on} aria-label={t.name}>
              {t.menu && <Caret />}
              <svg width="18" height="18">{t.art}</svg>
            </RailButton>
            {t.rule && <RailRule />}
          </React.Fragment>
        ))}
      </Rail>
    </Page>
  );
}
